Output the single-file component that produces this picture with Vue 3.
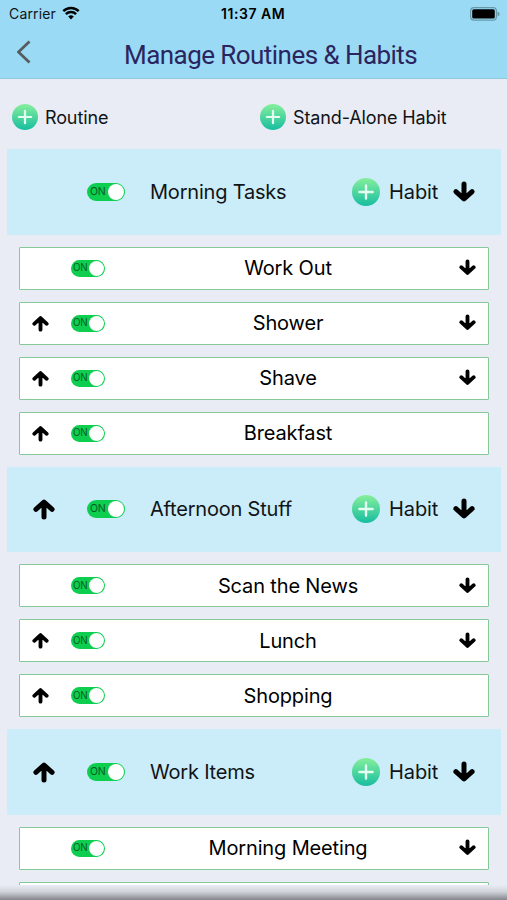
<script setup>
import { h } from 'vue'

const groups = [
  { name: 'Morning Tasks', habits: ['Work Out', 'Shower', 'Shave', 'Breakfast'] },
  { name: 'Afternoon Stuff', habits: ['Scan the News', 'Lunch', 'Shopping'] },
  { name: 'Work Items', habits: ['Morning Meeting', ''], open: true },
]

const Arrow = (props) =>
  h('svg', { viewBox: '0 0 22 22', class: props.up ? 'arrow up' : 'arrow' }, [
    h('path', { d: 'M11 3V16.5M2.9 10.6l8.1 7.4 8.1-7.4', fill: 'none', stroke: '#000', 'stroke-width': 5, 'stroke-linecap': 'round', 'stroke-linejoin': 'round' }),
    h('path', { d: 'M4.5 12h13L11 18Z', fill: '#000' }),
  ])
Arrow.props = { up: Boolean }

const Plus = () =>
  h('svg', { viewBox: '0 0 28 28', class: 'plus' }, [
    h('circle', { cx: 14, cy: 14, r: 14, fill: 'url(#mint)' }),
    h('path', { d: 'M14 7.4v13.2M7.4 14h13.2', stroke: '#e4fff2', 'stroke-width': 2.4, 'stroke-linecap': 'round' }),
  ])
</script>

<template>
  <div class="screen">
    <svg class="defs" width="0" height="0">
      <linearGradient id="mint" x1="0" y1="0" x2="0" y2="1">
        <stop offset="0" stop-color="#86ef9b" />
        <stop offset="1" stop-color="#17bda0" />
      </linearGradient>
    </svg>
    <header class="top">
      <div class="status">
        <span class="carrier">Carrier</span>
        <svg class="wifi" viewBox="0 0 18 14">
          <path d="M9 13.5 6.2 10.6a4 4 0 0 1 5.6 0Z" fill="#000" />
          <path d="M3.9 8.1a7.2 7.2 0 0 1 10.2 0M1.3 5.2a11 11 0 0 1 15.4 0" fill="none" stroke="#000" stroke-width="2.5" />
        </svg>
        <span class="time">11:37 AM</span>
        <svg class="battery" viewBox="0 0 30 14">
          <rect x=".6" y=".6" width="25.8" height="12.6" rx="3.4" fill="none" stroke="#6699aa" stroke-width="1.2" />
          <rect x="2.2" y="2.3" width="22.6" height="9.2" rx="1.6" fill="#000" />
          <path d="M27.5 4.5q2.2.8 2.2 2.5t-2.2 2.5Z" fill="#6699aa" />
        </svg>
      </div>
      <div class="nav">
        <svg class="back" viewBox="0 0 14 24"><path d="M12.5 1.5 1.5 12l11 10.5" fill="none" stroke="#555d60" stroke-width="2.8" /></svg>
        <h1>Manage Routines &amp; Habits</h1>
      </div>
    </header>
    <div class="actions">
      <button class="add routine"><Plus /><span>Routine</span></button>
      <button class="add"><Plus /><span>Stand-Alone Habit</span></button>
    </div>
    <main>
      <section v-for="(g, gi) in groups" :key="g.name">
        <div class="group">
          <span class="slot"><Arrow v-if="gi > 0" up /></span>
          <span class="toggle"><span class="on">ON</span><i /></span>
          <span class="name">{{ g.name }}</span>
          <button class="add"><Plus /><span>Habit</span></button>
          <Arrow />
        </div>
        <div v-for="(t, i) in g.habits" :key="t" class="item">
          <template v-if="t">
            <span class="slot"><Arrow v-if="i > 0" up /></span>
            <span class="toggle small"><span class="on">ON</span><i /></span>
            <span class="label">{{ t }}</span>
            <span class="slot end"><Arrow v-if="g.open || i < g.habits.length - 1" /></span>
          </template>
        </div>
      </section>
    </main>
    <div class="shade" />
  </div>
</template>

<style>
body { margin: 0; overflow: hidden; }
</style>

<style scoped>
.screen { position: relative; width: 507px; height: 900px; overflow: hidden; background: #e9ecf4; font-family: Inter, sans-serif; color: #101417; display: flex; flex-direction: column; }
.screen * { box-sizing: border-box; }
.defs { position: absolute; }
.top { height: 79px; flex: none; background: #9adaf4; border-bottom: 1px solid #91c9df; }
.status { height: 27px; padding: 0 7px 0 9px; display: flex; align-items: center; font-size: 14px; }
.carrier { width: 53px; letter-spacing: .15px; }
.wifi { width: 18px; height: 14px; margin-top: -1px; }
.time { margin-left: 141px; font-size: 14px; font-weight: 600; letter-spacing: .55px; color: #000; white-space: nowrap; }
.battery { width: 30px; height: 14px; margin-left: auto; }
.nav { height: 51px; display: flex; align-items: center; padding-left: 17px; }
.back { width: 14px; height: 24px; margin-top: -1px; }
h1 { margin: 4px 0 0 93px; font: 400 26px/32px Roboto, sans-serif; color: #2a2560; white-space: nowrap; letter-spacing: -.55px; }
.actions { height: 70px; flex: none; padding: 6px 12px 0; display: flex; align-items: center; }
.add { border: 0; padding: 0; background: none; font: inherit; color: inherit; display: flex; align-items: center; white-space: nowrap; }
.actions .add { font-size: 18px; gap: 7px; letter-spacing: -.12px; }
.actions .plus { width: 26px; height: 26px; }
.routine { width: 248px; }
.plus { width: 28px; height: 28px; flex: none; }
section { display: flex; flex-direction: column; gap: 12px; margin-bottom: 12px; }
.group { height: 85.5px; margin: 0 6px 0 7px; padding-left: 26px; background: #cbecf9; border-radius: 1px; display: flex; align-items: center; font-size: 20px; }
.group > .slot { width: 54px; display: flex; }
.arrow { width: 22px; height: 22px; display: block; flex: none; overflow: visible; }
.up { transform: rotate(180deg); }
.toggle { width: 38px; height: 18px; flex: none; border-radius: 9px; background: #0dce4f; padding: 1px; display: flex; align-items: center; justify-content: space-between; }
.on { font: 10.5px/16px Inter, sans-serif; letter-spacing: -.2px; color: #065c27; margin-left: 2px; }
.toggle i { width: 16px; height: 16px; border-radius: 50%; background: #fff; flex: none; }
.name { width: 202px; margin-left: 25px; white-space: nowrap; letter-spacing: -.2px; }
.group .add { gap: 9px; margin-right: 14px; width: 87px; letter-spacing: -.1px; }
.item { height: 43px; margin: 0 18px 0 19px; padding: 0 12px; border: 1px solid #86c998; border-radius: 1px; background: #fff; display: flex; align-items: center; font-size: 20px; }
.item .arrow { width: 17px; height: 17px; }
.item .slot { width: 39px; display: flex; }
.small { width: 34px; height: 17px; }
.small .on { font-size: 9.8px; margin-left: 1px; }
.small i { width: 15px; height: 15px; }
.label { width: 366px; flex: none; text-align: center; color: #000; letter-spacing: -.15px; }
.item .end { width: 17px; flex: none; margin-left: -12px; margin-top: -1px; }
.shade { position: absolute; left: 0; right: 0; bottom: 0; height: 15px; background: linear-gradient(#e9ecf4, #d1d3da 45%, #85868c); }
</style>
